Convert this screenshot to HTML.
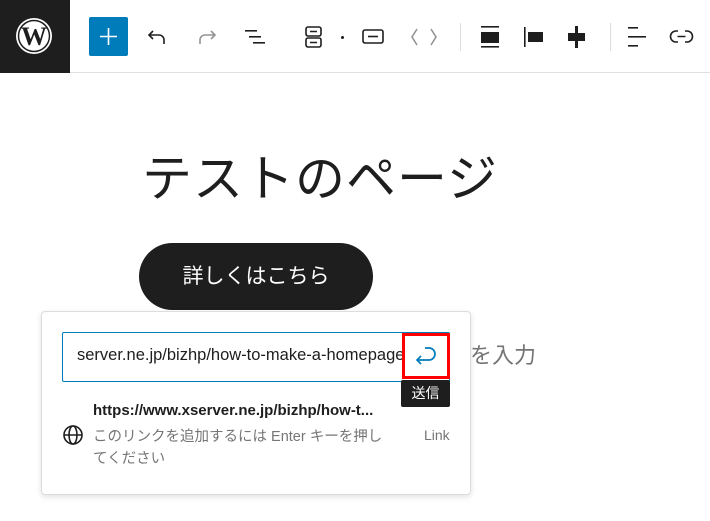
<!DOCTYPE html>
<html><head><meta charset="utf-8"><style>
*{margin:0;padding:0;box-sizing:border-box}
body{width:710px;height:521px;background:#fff;position:relative;overflow:hidden;font-family:"Liberation Sans","Noto Sans CJK JP",sans-serif;color:#1e1e1e}
.a{position:absolute}
svg{position:absolute}
</style></head><body>
<div class="a" style="left:0;top:0;width:710px;height:73px;border-bottom:1px solid #e0e0e0"></div>
<div class="a" style="left:0;top:0;width:70px;height:73px;background:#1e1e1e"></div>
<svg style="left:14px;top:16px" width="40" height="40" viewBox="0 0 40 40"><circle cx="20" cy="20" r="18" fill="#fff"/><circle cx="20" cy="20" r="15.5" fill="none" stroke="#1e1e1e" stroke-width="1.5"/><text x="20" y="29" text-anchor="middle" font-family="Liberation Serif" font-size="26" font-weight="bold" fill="#1e1e1e">W</text></svg>
<div class="a" style="left:89px;top:17px;width:39px;height:39px;background:#007cba;border-radius:2px"></div>
<svg style="left:89px;top:17px" width="39" height="39"><path d="M19.5 11v17M11 19.5h17" stroke="#fff" stroke-width="1.6"/></svg>
<svg style="left:145px;top:25px" width="24" height="24" fill="none" stroke="#1e1e1e" stroke-width="1.6"><path d="M8 6L4 10l4 4M4 10h10a5 5 0 0 1 5 5v4"/></svg>
<svg style="left:195px;top:25px" width="24" height="24" fill="none" stroke="#949494" stroke-width="1.6"><path d="M16 6l4 4-4 4M20 10H10a5 5 0 0 0-5 5v4"/></svg>
<svg style="left:243px;top:25px" width="26" height="24" fill="#1e1e1e"><rect x="2" y="5" width="12" height="1.6"/><rect x="6" y="11" width="12" height="1.6"/><rect x="10" y="17" width="12" height="1.6"/></svg>
<svg style="left:303px;top:24px" width="24" height="26" fill="none" stroke="#1e1e1e" stroke-width="1.6"><rect x="3" y="3" width="15" height="9" rx="2"/><rect x="3" y="14" width="15" height="9" rx="2"/><path d="M7 7.5h7M7 18.5h7"/></svg>
<div class="a" style="left:341px;top:36px;width:3px;height:3px;background:#1e1e1e;border-radius:2px"></div>
<svg style="left:360px;top:25px" width="26" height="24" fill="none" stroke="#1e1e1e" stroke-width="1.6"><rect x="3" y="5" width="20" height="13" rx="2"/><path d="M8 11.5h10"/></svg>
<svg style="left:408px;top:25px" width="32" height="24" fill="none" stroke="#949494" stroke-width="1.6"><path d="M9 4l-5 8 5 8M23 4l5 8-5 8"/></svg>
<div class="a" style="left:460px;top:23px;width:1px;height:28px;background:#ddd"></div>
<svg style="left:478px;top:24px" width="24" height="26" fill="#1e1e1e"><rect x="3" y="2" width="18" height="1.6"/><rect x="3" y="8" width="18" height="11"/><rect x="3" y="22" width="18" height="1.6"/></svg>
<svg style="left:522px;top:24px" width="24" height="26" fill="#1e1e1e"><rect x="2" y="3" width="1.6" height="20"/><rect x="6" y="8" width="15" height="10"/></svg>
<svg style="left:565px;top:24px" width="24" height="26" fill="#1e1e1e"><rect x="10" y="2" width="3" height="22"/><rect x="3" y="9" width="17" height="8"/></svg>
<div class="a" style="left:610px;top:23px;width:1px;height:28px;background:#ddd"></div>
<svg style="left:626px;top:24px" width="24" height="26" fill="#1e1e1e"><rect x="2" y="3" width="10" height="1.6"/><rect x="2" y="12" width="18" height="1.6"/><rect x="2" y="21" width="10" height="1.6"/></svg>
<svg style="left:669px;top:26px" width="26" height="22" fill="none" stroke="#1e1e1e" stroke-width="1.6"><path d="M9 5H7a5.5 5.5 0 0 0 0 11h2M16 5h2a5.5 5.5 0 0 1 0 11h-2M8.5 10.5h8"/></svg>
<div class="a" style="left:142px;top:147px;font-size:50px;line-height:64px;letter-spacing:1px">テストのページ</div>
<div class="a" style="left:139px;top:243px;width:234px;height:67px;background:#1e1e1e;border-radius:34px;color:#fff;font-size:21px;line-height:67px;text-align:center">詳しくはこちら</div>
<div class="a" style="left:470px;top:338px;font-size:22px;color:#757575">を入力</div>
<div class="a" style="left:41px;top:311px;width:430px;height:184px;background:#fff;border:1px solid #ddd;border-radius:4px;box-shadow:0 2px 6px rgba(0,0,0,.12)"></div>
<div class="a" style="left:62px;top:332px;width:388px;height:50px;border:1.5px solid #007cba;border-radius:2px"></div>
<div class="a" style="left:77px;top:346px;width:325px;height:24px;overflow:hidden;white-space:nowrap;font-size:16.5px;color:#1e1e1e">server.ne.jp/bizhp/how-to-make-a-homepage/</div>
<div class="a" style="left:402px;top:333px;width:48px;height:46px;background:#fff;border:3px solid #f00"></div>
<svg style="left:412px;top:342px" width="28" height="28" fill="none" stroke="#007cba" stroke-width="1.7"><path d="M13 6h4a6 6 0 0 1 0 12H5M9 14l-4 4 4 4"/></svg>
<div class="a" style="left:401px;top:380px;width:49px;height:27px;background:#1e1e1e;border-radius:2px;color:#fff;font-size:14px;line-height:27px;text-align:center">送信</div>
<div class="a" style="left:93px;top:402px;font-size:15px;font-weight:bold">https://www.xserver.ne.jp/bizhp/how-t...</div>
<div class="a" style="left:93px;top:426px;width:300px;font-size:14.5px;line-height:22px;color:#757575">このリンクを追加するには Enter キーを押してください</div>
<div class="a" style="left:424px;top:427px;font-size:14px;color:#757575">Link</div>
<svg style="left:62px;top:424px" width="22" height="22" fill="none" stroke="#1e1e1e" stroke-width="1.6"><circle cx="11" cy="11" r="9"/><ellipse cx="11" cy="11" rx="4" ry="9"/><path d="M2 11h18"/></svg>
</body></html>
